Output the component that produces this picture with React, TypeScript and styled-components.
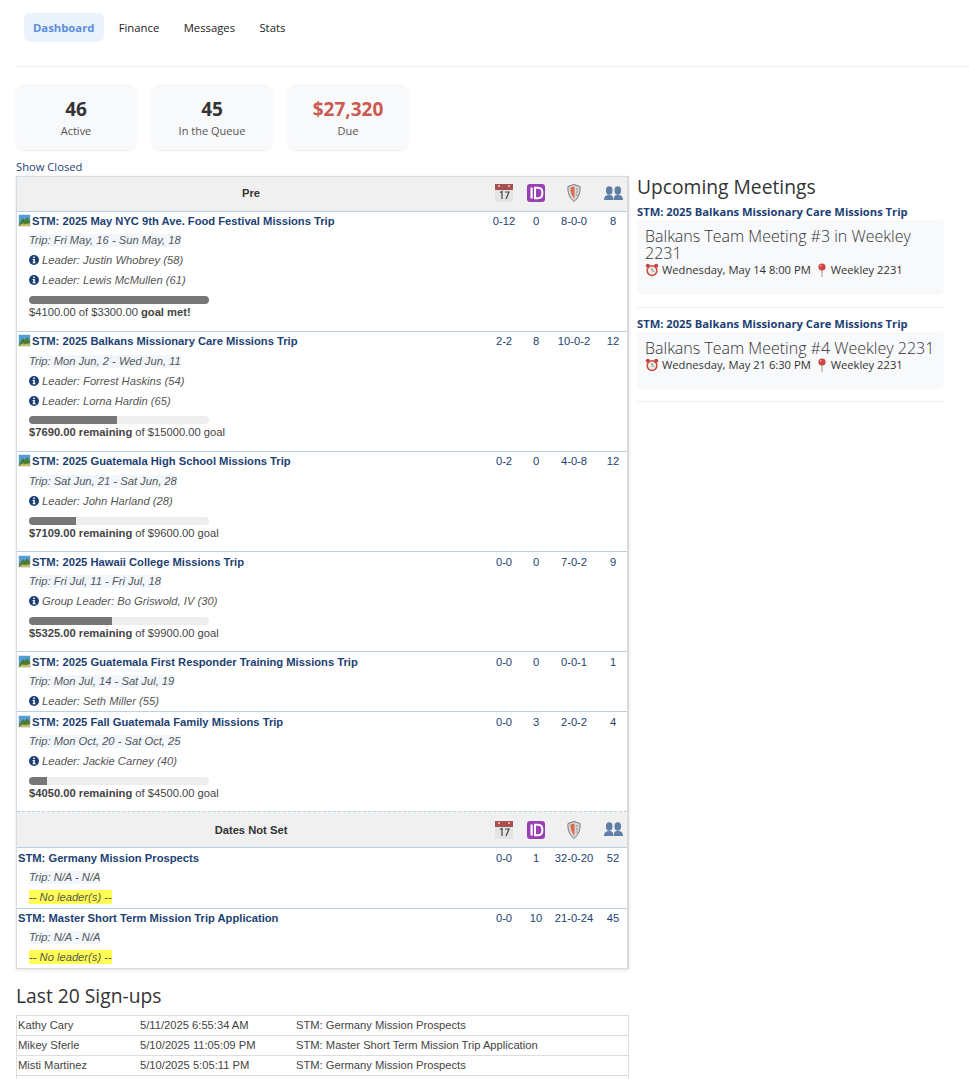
import styled, { createGlobalStyle } from 'styled-components';
import { ReactNode } from 'react';

const GlobalStyle = createGlobalStyle`
  html, body {
    margin: 0;
    padding: 0;
    background: #fff;
    overflow: hidden;
  }
  body {
    height: 1079px;
    font-family: 'Open Sans', sans-serif;
    color: #333;
  }
`;

const Page = styled.div`
  padding: 13px 0 0 16px;
`;

const Nav = styled.nav`
  display: flex;
  padding-left: 8px;
  padding-bottom: 24px;
  border-bottom: 1px solid #eceef0;
`;

const NavItem = styled.a<{ $active?: boolean }>`
  height: 29px;
  line-height: 29px;
  padding: 0 ${(p) => (p.$active ? '10px 0 9px' : '12.2px')};
  margin-right: ${(p) => (p.$active ? '2px' : '0')};
  font-size: 11.3px;
  border-radius: 6px;
  font-weight: ${(p) => (p.$active ? 700 : 400)};
  color: ${(p) => (p.$active ? '#5b8fdc' : '#222')};
  background: ${(p) => (p.$active ? '#eaf2fc' : 'transparent')};
`;

const Stats = styled.div`
  display: flex;
  gap: 16px;
  margin-top: 17px;
`;

const StatCard = styled.div`
  width: 120px;
  height: 66px;
  box-sizing: border-box;
  padding-top: 13px;
  text-align: center;
  background: #f8f9fb;
  border-radius: 8px;
  box-shadow: 0 1px 2px rgba(0, 0, 0, 0.08);
`;

const StatValue = styled.div<{ $due?: boolean }>`
  font-size: 19px;
  line-height: 25px;
  font-weight: 700;
  color: ${(p) => (p.$due ? '#cb5a52' : '#333')};
`;

const StatLabel = styled.div`
  font-size: 11px;
  line-height: 18px;
  color: #555;
`;

const ShowClosed = styled.a`
  display: block;
  margin-top: 9px;
  height: 17px;
  line-height: 15px;
  font-size: 11.2px;
  color: #1d4379;
`;

const Columns = styled.div`
  display: flex;
  align-items: flex-start;
  gap: 8px;
`;

const Main = styled.div`
  width: 613px;
  flex: none;
`;

const Board = styled.div`
  box-sizing: border-box;
  width: 613px;
  height: 793px;
  border: 1px solid #d3dde3;
  border-right: 2px solid #d8dadc;
  border-bottom-color: #d8dadc;
  box-shadow: 0 1px 3px rgba(0, 0, 0, 0.12);
  font-family: 'Liberation Sans', Arial, sans-serif;
`;

const gridColumns = 'minmax(0, 1fr) 38px 26px 50px 28px';

const GroupHead = styled.div<{ $dashed?: boolean }>`
  display: grid;
  grid-template-columns: ${gridColumns};
  align-items: center;
  box-sizing: border-box;
  height: ${(p) => (p.$dashed ? '37px' : '35px')};
  padding-bottom: ${(p) => (p.$dashed ? '0' : '2px')};
  background: #f0f0f0;
  border-top: ${(p) => (p.$dashed ? '1px dashed #b9d3e0' : 'none')};
  border-bottom: 1px solid #b7d3e2;
`;

const GroupTitle = styled.div`
  text-align: center;
  font-size: 11.2px;
  font-weight: 700;
  color: #333;
`;

const IconCell = styled.div`
  display: flex;
  justify-content: center;
  align-items: center;
`;

const Row = styled.div<{ $h: number; $last?: boolean }>`
  display: grid;
  grid-template-columns: ${gridColumns};
  box-sizing: border-box;
  height: ${(p) => p.$h}px;
  border-bottom: ${(p) => (p.$last ? 'none' : '1px solid #b7d3e2')};
`;

const RowBody = styled.div<{ $lifted?: boolean }>`
  padding-left: 1px;
  min-width: 0;
  margin-top: ${(p) => (p.$lifted ? '-1px' : '0')};
`;

const TitleLine = styled.div<{ $up?: boolean }>`
  display: flex;
  align-items: center;
  box-sizing: border-box;
  height: 19px;
  padding-bottom: ${(p) => (p.$up ? '2px' : '0')};
  font-size: 11.2px;
  font-weight: 700;
  color: #1c3f73;
  white-space: nowrap;
`;

const Num = styled.div<{ $low?: boolean }>`
  text-align: center;
  height: 19px;
  line-height: ${(p) => (p.$low ? '21px' : '19px')};
  font-size: 11.2px;
  color: #1c3f73;
`;

const Detail = styled.div`
  display: flex;
  align-items: center;
  gap: 3px;
  height: 20px;
  margin-left: 11px;
  font-size: 11.2px;
  font-style: italic;
  color: #555;
`;

const TripDates = styled.span`
  background: #f1f7fc;
  line-height: 13px;
`;

const NoLeader = styled.span`
  background: #ffff55;
  line-height: 14px;
`;

const Progress = styled.div<{ $tight?: boolean }>`
  width: 180px;
  height: 8px;
  margin: ${(p) => (p.$tight ? '5px' : '6px')} 0 0 11px;
  border-radius: 4px;
  background: #eee;
  overflow: hidden;
`;

const ProgressFill = styled.div`
  height: 100%;
  background: #777;
`;

const Goal = styled.div`
  margin: 1px 0 0 11px;
  height: 16px;
  line-height: 15px;
  font-size: 11.2px;
  color: #444;
`;

const SectionTitle = styled.h2`
  margin: 0;
  font-size: 19.25px;
  line-height: 22px;
  font-weight: 400;
  color: #333;
`;

const SideHeading = styled(SectionTitle)`
  margin-bottom: 7px;
`;

const SignupHeading = styled(SectionTitle)`
  margin: 16px 0 8px;
`;

const Signups = styled.div`
  border: 1px solid #ddd;
  border-bottom: none;
  font-family: 'Liberation Sans', Arial, sans-serif;
  font-size: 11.2px;
  color: #444;
`;

const SignupRow = styled.div`
  display: grid;
  grid-template-columns: 122px 156px 1fr;
  box-sizing: border-box;
  height: 20px;
  line-height: 19px;
  padding-left: 1px;
  border-bottom: 1px solid #ddd;
`;

const Side = styled.aside`
  width: 307px;
  flex: none;
`;

const MeetingBlock = styled.div`
  padding-bottom: 12px;
  margin-bottom: 9px;
  border-bottom: 1px solid #eceef0;
`;

const MeetingTrip = styled.div`
  height: 15px;
  line-height: 13px;
  font-size: 11.2px;
  font-weight: 700;
  color: #1c3f73;
`;

const MeetingCard = styled.div<{ $h: number }>`
  box-sizing: border-box;
  height: ${(p) => p.$h}px;
  padding: 8px 8px 0;
  background: #f8f9fb;
  border-radius: 5px;
`;

const MeetingName = styled.div`
  font-size: 16px;
  line-height: 17px;
  font-weight: 300;
  color: #333;
`;

const MeetingWhen = styled.div`
  display: flex;
  align-items: center;
  height: 15px;
  font-size: 11.2px;
  color: #333;
  white-space: nowrap;
`;

const CalendarIcon = () => (
  <svg width="18" height="18" viewBox="0 0 18 18">
    <rect x="0" y="0" width="18" height="18" fill="#e4e4e4" />
    <rect x="0" y="0" width="18" height="6" fill="#a8504f" />
    <circle cx="4" cy="2" r="1" fill="#e8d0d0" />
    <circle cx="14" cy="2" r="1" fill="#e8d0d0" />
    <path d="M5 8.5 L7 7.5 V15 M10 8 H14 L11 15" fill="none" stroke="#444" strokeWidth="1.2" />
  </svg>
);

const IdIcon = () => (
  <svg width="18" height="18" viewBox="0 0 18 18">
    <rect x="0" y="0" width="18" height="18" rx="3" fill="#9b3fb5" />
    <rect x="3.5" y="3.5" width="2.2" height="11" fill="#fff" />
    <path d="M8 3.8 H11 C14.4 3.8 15.4 6.4 15.4 9 C15.4 11.6 14.4 14.2 11 14.2 H8 Z" fill="none" stroke="#fff" strokeWidth="2" />
  </svg>
);

const ShieldIcon = () => (
  <svg width="14" height="18" viewBox="0 0 14 18">
    <path d="M1 2.5 L7 0.5 L13 2.5 C13.5 8 12 13.5 7 17.5 C2 13.5 0.5 8 1 2.5 Z" fill="#d8d8d8" stroke="#777" />
    <path d="M3.5 3.5 L7.5 2.5 V14.5 C5 12.5 3.2 8 3.5 3.5 Z" fill="#dd6b50" />
    <path d="M9 5 H11 M9 8 H11 M9 11 H10.5" stroke="#888" />
  </svg>
);

const PeopleIcon = () => (
  <svg width="19" height="15" viewBox="0 0 19 15">
    <g fill="#5f7ea6">
      <ellipse cx="5.2" cy="4.5" rx="3.3" ry="4.2" />
      <ellipse cx="13.8" cy="4.5" rx="3.3" ry="4.2" />
      <path d="M0 14 C0 10 2.5 9 5.2 9 C8 9 9.3 10 9.3 14 Z" />
      <path d="M9.7 14 C9.7 10 11 9 13.8 9 C16.5 9 19 10 19 14 Z" />
    </g>
  </svg>
);

const ThumbIcon = () => (
  <svg width="13" height="13" viewBox="0 0 13 13" style={{ flex: 'none', marginRight: 1 }}>
    <rect x="0" y="0" width="13" height="13" fill="#dfe6ea" />
    <rect x="1" y="1" width="11" height="11" fill="#4f9fd8" />
    <path d="M1 10 L5 4 L7 6 L9 3 L12 7 V12 H1 Z" fill="#4c7a3a" />
    <path d="M1 12 L4 9.5 L8 10 L12 9 V12 Z" fill="#c8b864" />
  </svg>
);

const InfoIcon = () => (
  <svg width="10" height="10" viewBox="0 0 10 10" style={{ flex: 'none' }}>
    <circle cx="5" cy="5" r="5" fill="#1c3f73" />
    <rect x="4.2" y="1.6" width="1.6" height="1.5" fill="#fff" />
    <path d="M3.6 4 H5.8 V7.2 H6.6 V8.2 H3.6 V7.2 H4.3 V5 H3.6 Z" fill="#fff" />
  </svg>
);

const ClockIcon = () => (
  <svg width="14" height="14" viewBox="0 0 14 14" style={{ flex: 'none', marginRight: 3 }}>
    <circle cx="2.8" cy="2.8" r="2" fill="#c9433c" />
    <circle cx="11.2" cy="2.8" r="2" fill="#c9433c" />
    <circle cx="7" cy="7.6" r="5.6" fill="#c9433c" />
    <circle cx="7" cy="7.6" r="4.2" fill="#ece8e4" />
    <path d="M7 5 V7.6 L9.2 8.6" fill="none" stroke="#777" strokeWidth="0.8" />
  </svg>
);

const PinIcon = () => (
  <svg width="10" height="14" viewBox="0 0 10 14" style={{ flex: 'none', margin: '0 4px 0 6px' }}>
    <rect x="4.5" y="5" width="1" height="9" fill="#999" />
    <circle cx="5" cy="4" r="3.6" fill="#d0453f" />
    <circle cx="3.8" cy="2.8" r="0.9" fill="#f0a8a4" />
  </svg>
);

const HeaderIcons = () => (
  <>
    <IconCell><CalendarIcon /></IconCell>
    <IconCell><IdIcon /></IconCell>
    <IconCell><ShieldIcon /></IconCell>
    <IconCell><PeopleIcon /></IconCell>
  </>
);

type Trip = {
  title: string;
  h: number;
  dates: string;
  leaders: string[];
  stats: [string, string, string, string];
  bar?: number;
  goal?: ReactNode;
  thumb?: boolean;
  last?: boolean;
  lift?: 'all' | 'title';
  tight?: boolean;
};

const remaining = (left: string, total: string) => (
  <>
    <b>${left} remaining</b> of ${total} goal
  </>
);

const preTrips: Trip[] = [
  {
    title: 'STM: 2025 May NYC 9th Ave. Food Festival Missions Trip',
    h: 120,
    dates: 'Trip: Fri May, 16 - Sun May, 18',
    leaders: ['Leader: Justin Whobrey (58)', 'Leader: Lewis McMullen (61)'],
    stats: ['0-12', '0', '8-0-0', '8'],
    bar: 100,
    goal: (
      <>
        $4100.00 of $3300.00 <b>goal met!</b>
      </>
    ),
    thumb: true,
    lift: 'all',
  },
  {
    title: 'STM: 2025 Balkans Missionary Care Missions Trip',
    h: 120,
    dates: 'Trip: Mon Jun, 2 - Wed Jun, 11',
    leaders: ['Leader: Forrest Haskins (54)', 'Leader: Lorna Hardin (65)'],
    stats: ['2-2', '8', '10-0-2', '12'],
    bar: 48.7,
    goal: remaining('7690.00', '15000.00'),
    thumb: true,
    lift: 'title',
    tight: true,
  },
  {
    title: 'STM: 2025 Guatemala High School Missions Trip',
    h: 100,
    dates: 'Trip: Sat Jun, 21 - Sat Jun, 28',
    leaders: ['Leader: John Harland (28)'],
    stats: ['0-2', '0', '4-0-8', '12'],
    bar: 26,
    goal: remaining('7109.00', '9600.00'),
    thumb: true,
    lift: 'title',
  },
  {
    title: 'STM: 2025 Hawaii College Missions Trip',
    h: 100,
    dates: 'Trip: Fri Jul, 11 - Fri Jul, 18',
    leaders: ['Group Leader: Bo Griswold, IV (30)'],
    stats: ['0-0', '0', '7-0-2', '9'],
    bar: 46,
    goal: remaining('5325.00', '9900.00'),
    thumb: true,
  },
  {
    title: 'STM: 2025 Guatemala First Responder Training Missions Trip',
    h: 60,
    dates: 'Trip: Mon Jul, 14 - Sat Jul, 19',
    leaders: ['Leader: Seth Miller (55)'],
    stats: ['0-0', '0', '0-0-1', '1'],
    thumb: true,
  },
  {
    title: 'STM: 2025 Fall Guatemala Family Missions Trip',
    h: 99,
    dates: 'Trip: Mon Oct, 20 - Sat Oct, 25',
    leaders: ['Leader: Jackie Carney (40)'],
    stats: ['0-0', '3', '2-0-2', '4'],
    bar: 10,
    goal: remaining('4050.00', '4500.00'),
    thumb: true,
    last: true,
  },
];

const openTrips: Trip[] = [
  {
    title: 'STM: Germany Mission Prospects',
    h: 61,
    dates: 'Trip: N/A - N/A',
    leaders: [],
    stats: ['0-0', '1', '32-0-20', '52'],
  },
  {
    title: 'STM: Master Short Term Mission Trip Application',
    h: 59,
    dates: 'Trip: N/A - N/A',
    leaders: [],
    stats: ['0-0', '10', '21-0-24', '45'],
    last: true,
    lift: 'all',
  },
];

const signups = [
  ['Kathy Cary', '5/11/2025 6:55:34 AM', 'STM: Germany Mission Prospects'],
  ['Mikey Sferle', '5/10/2025 11:05:09 PM', 'STM: Master Short Term Mission Trip Application'],
  ['Misti Martinez', '5/10/2025 5:05:11 PM', 'STM: Germany Mission Prospects'],
  ['', '', ''],
];

const meetings = [
  { name: 'Balkans Team Meeting #3 in Weekley 2231', when: 'Wednesday, May 14 8:00 PM', h: 75 },
  { name: 'Balkans Team Meeting #4 Weekley 2231', when: 'Wednesday, May 21 6:30 PM', h: 57 },
];

function TripRow({ trip }: { trip: Trip }) {
  return (
    <Row $h={trip.h} $last={trip.last}>
      <RowBody $lifted={trip.lift === 'all'}>
        <TitleLine $up={trip.lift === 'title'}>
          {trip.thumb && <ThumbIcon />}
          {trip.title}
        </TitleLine>
        <Detail>
          <TripDates>{trip.dates}</TripDates>
        </Detail>
        {trip.leaders.length === 0 && (
          <Detail>
            <NoLeader>-- No leader(s) --</NoLeader>
          </Detail>
        )}
        {trip.leaders.map((leader) => (
          <Detail key={leader}>
            <InfoIcon />
            {leader}
          </Detail>
        ))}
        {trip.bar !== undefined && (
          <>
            <Progress $tight={trip.tight}>
              <ProgressFill style={{ width: `${trip.bar}%` }} />
            </Progress>
            <Goal>{trip.goal}</Goal>
          </>
        )}
      </RowBody>
      {trip.stats.map((value, index) => (
        <Num key={index} $low={!trip.lift}>{value}</Num>
      ))}
    </Row>
  );
}

export default function App() {
  return (
    <>
      <GlobalStyle />
      <Page>
        <Nav>
          <NavItem $active>Dashboard</NavItem>
          <NavItem>Finance</NavItem>
          <NavItem>Messages</NavItem>
          <NavItem>Stats</NavItem>
        </Nav>
        <Stats>
          <StatCard>
            <StatValue>46</StatValue>
            <StatLabel>Active</StatLabel>
          </StatCard>
          <StatCard>
            <StatValue>45</StatValue>
            <StatLabel>In the Queue</StatLabel>
          </StatCard>
          <StatCard>
            <StatValue $due>$27,320</StatValue>
            <StatLabel>Due</StatLabel>
          </StatCard>
        </Stats>
        <ShowClosed>Show Closed</ShowClosed>
        <Columns>
          <Main>
            <Board>
              <GroupHead>
                <GroupTitle>Pre</GroupTitle>
                <HeaderIcons />
              </GroupHead>
              {preTrips.map((trip) => (
                <TripRow key={trip.title} trip={trip} />
              ))}
              <GroupHead $dashed>
                <GroupTitle>Dates Not Set</GroupTitle>
                <HeaderIcons />
              </GroupHead>
              {openTrips.map((trip) => (
                <TripRow key={trip.title} trip={trip} />
              ))}
            </Board>
            <SignupHeading>Last 20 Sign-ups</SignupHeading>
            <Signups>
              {signups.map((row, index) => (
                <SignupRow key={index}>
                  <span>{row[0]}</span>
                  <span>{row[1]}</span>
                  <span>{row[2]}</span>
                </SignupRow>
              ))}
            </Signups>
          </Main>
          <Side>
            <SideHeading>Upcoming Meetings</SideHeading>
            {meetings.map((meeting) => (
              <MeetingBlock key={meeting.name}>
                <MeetingTrip>STM: 2025 Balkans Missionary Care Missions Trip</MeetingTrip>
                <MeetingCard $h={meeting.h}>
                  <MeetingName>{meeting.name}</MeetingName>
                  <MeetingWhen>
                    <ClockIcon />
                    {meeting.when}
                    <PinIcon />
                    Weekley 2231
                  </MeetingWhen>
                </MeetingCard>
              </MeetingBlock>
            ))}
          </Side>
        </Columns>
      </Page>
    </>
  );
}
